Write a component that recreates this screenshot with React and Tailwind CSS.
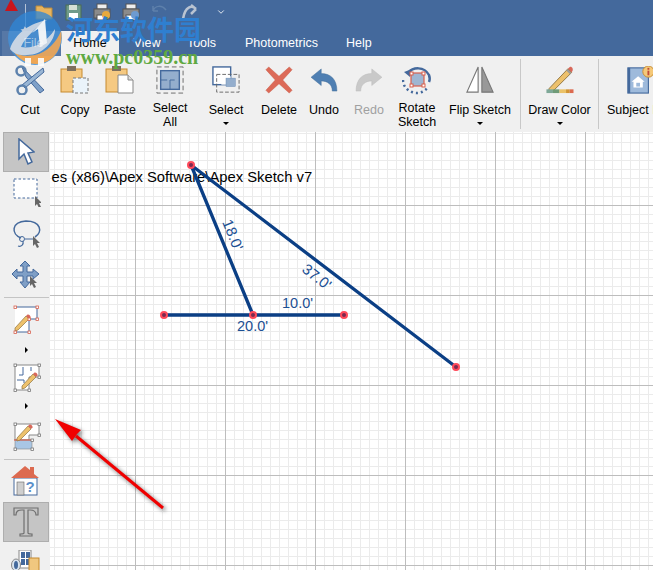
import React from "react";
import { ChevronDown } from "lucide-react";

const FONT = "font-['Liberation_Sans',sans-serif]";

// ribbon icons
const CutIcon = () => (
  <svg width="30" height="30" viewBox="0 0 30 30" fill="none">
    <path d="M7 2 L29 25 L25 28 L11 12 Z" fill="#7fa0c8" stroke="#44699c" />
    <path d="M28 3 L7 20 L10 23 L29 7 Z" fill="#9ab6d4" stroke="#44699c" />
    <circle cx="6" cy="6" r="4.5" stroke="#5d82ad" strokeWidth="2.5" />
    <circle cx="7" cy="25" r="4.5" stroke="#5d82ad" strokeWidth="2.5" />
  </svg>
);

const CopyIcon = () => (
  <svg width="30" height="28" viewBox="0 0 30 28" fill="none">
    <rect x="1" y="3" width="21" height="23" fill="#f5c982" stroke="#c68a2e" />
    <rect x="7" y="0" width="9" height="5" fill="#7d6f5f" />
    <rect x="13" y="12" width="15" height="15" fill="#eaf3fa" stroke="#777" strokeDasharray="3 2" />
  </svg>
);

const PasteIcon = () => (
  <svg width="30" height="28" viewBox="0 0 30 28" fill="none">
    <rect x="1" y="3" width="21" height="23" fill="#f5c982" stroke="#c68a2e" />
    <rect x="7" y="0" width="9" height="5" fill="#7d6f5f" />
    <path d="M13 9 H23 L28 14 V27 H13 Z" fill="#fff" stroke="#888" />
    <path d="M23 9 V14 H28" fill="#ddd" stroke="#888" />
  </svg>
);

const SelectAllIcon = () => (
  <svg width="28" height="28" viewBox="0 0 30 30" fill="none">
    <rect x="1" y="1" width="28" height="28" stroke="#666" strokeDasharray="5 3" />
    <rect x="5" y="5" width="20" height="20" fill="#94aecd" stroke="#44699c" strokeWidth="1.5" />
    <path d="M5 15 H12 M15 15 H20 M15 15 V25" stroke="#44699c" />
  </svg>
);

const SelectIcon = () => (
  <svg width="28" height="28" viewBox="0 0 30 30" fill="none">
    <rect x="1" y="1" width="19" height="19" fill="#fff" stroke="#44699c" strokeWidth="1.5" />
    <rect x="5" y="9" width="24" height="19" stroke="#666" strokeDasharray="4 2" />
    <rect x="10" y="11" width="10" height="9" fill="#fff" />
    <rect x="15" y="13" width="10" height="9" fill="#94aecd" stroke="#6a8bb2" strokeWidth="0.5" />
  </svg>
);

const DeleteIcon = () => (
  <svg width="28" height="28" viewBox="0 0 30 30">
    <path d="M4 1 L15 11 L26 1 L29 4 L19 15 L29 26 L26 29 L15 19 L4 29 L1 26 L11 15 L1 4 Z" fill="#dc6a58" stroke="#c8553f" strokeWidth="0.5" />
  </svg>
);

const UndoIcon = ({ color = "#4f7fb2", flip }) => (
  <svg width="28" height="24" viewBox="0 0 30 26" fill="none" className={flip ? "-scale-x-100" : ""}>
    <path d="M1 10 L12 1 V6 C22 6 29 12 29 25 H24 C24 18 19 14 12 14 V19 Z" fill={color} stroke={flip ? "#b9b9b9" : "#3b6896"} strokeWidth="0.5" />
  </svg>
);

const RotateIcon = () => (
  <svg width="30" height="30" viewBox="0 0 30 30" fill="none">
    <path d="M6 8 C11 2 22 1 27 10 C28 13 28 15 27 17" stroke="#44699c" strokeWidth="2.5" />
    <path d="M2 7 L10 4 L8 12 Z" fill="#44699c" />
    <path d="M1 15 C1 20 4 25 10 27 C15 29 22 28 26 22" stroke="#44699c" strokeWidth="2.5" strokeDasharray="2 3" />
    <rect x="9" y="8" width="13" height="13" fill="#9fb6d2" stroke="#d7604e" strokeWidth="1.2" />
    <rect x="8" y="7" width="3" height="3" fill="#fff" stroke="#d7604e" />
    <rect x="20" y="7" width="3" height="3" fill="#fff" stroke="#d7604e" />
    <rect x="8" y="19" width="3" height="3" fill="#fff" stroke="#d7604e" />
    <rect x="20" y="19" width="3" height="3" fill="#fff" stroke="#d7604e" />
  </svg>
);

const FlipIcon = () => (
  <svg width="28" height="28" viewBox="0 0 30 30">
    <path d="M13 1 V28 H1 Z" fill="#fff" stroke="#777" strokeWidth="1.2" />
    <path d="M17 1 V28 H29 Z" fill="#999" stroke="#777" strokeWidth="1.2" />
  </svg>
);

const DrawColorIcon = () => (
  <svg width="29" height="28" viewBox="0 0 30 30">
    <path d="M4 24 L24 3 L28 7 L8 27 L3 28 Z" fill="#edc16c" stroke="#8f7440" />
    <path d="M24 3 L26 1 C28 0 30 3 29 5 L28 7 Z" fill="#d8685a" />
    <path d="M23 4 L27 8" stroke="#999" strokeWidth="2" />
    <rect x="1" y="25" width="7" height="4" fill="#7fa898" />
    <rect x="8" y="25" width="7" height="4" fill="#6f9b78" />
    <rect x="15" y="25" width="7" height="4" fill="#ebc267" />
    <rect x="22" y="25" width="4" height="4" fill="#d29433" />
    <rect x="26" y="25" width="4" height="4" fill="#dc6a50" />
  </svg>
);

const SubjectIcon = () => (
  <svg width="28" height="28" viewBox="0 0 30 30">
    <rect x="2" y="2" width="22" height="27" fill="#9ebadb" stroke="#44699c" strokeWidth="1.2" />
    <rect x="2" y="2" width="2.5" height="27" fill="#44699c" />
    <path d="M13 11 L20 17 H18 V23 H8 V17 H6 Z" fill="#fff" />
    <rect x="11" y="18" width="4" height="4" fill="#9ebadb" />
    <circle cx="24" cy="6" r="6" fill="#f5c878" stroke="#c68a2e" />
    <rect x="23" y="5" width="2" height="5" fill="#c04a36" />
    <rect x="23" y="2" width="2" height="2" fill="#c04a36" />
  </svg>
);

// small grey cursor in the corner of the tool icons
const Cursor = ({ x, y }) => (
  <path d={`M${x} ${y} l0 10 l2 -2 l2 4 l2 -1 l-2 -4 l3 0 Z`} fill="#666" />
);

const PointerTool = () => (
  <svg width="18" height="28" viewBox="0 0 18 28">
    <path d="M2 1 V21 L7 16 L11 26 L15 24 L11 15 L17 14 Z" fill="#fff" stroke="#44699c" strokeWidth="1.5" />
  </svg>
);

const MarqueeTool = () => (
  <svg width="30" height="30" viewBox="0 0 30 30" fill="none">
    <rect x="3" y="2" width="23" height="19" fill="#fff" stroke="#44699c" strokeDasharray="2.5 2" />
    <Cursor x={24} y={19} />
  </svg>
);

const LassoTool = () => (
  <svg width="30" height="30" viewBox="0 0 30 30" fill="none">
    <path d="M10 20 C0 16 0 4 15 3 C30 3 32 14 24 19" stroke="#44699c" strokeWidth="1.5" />
    <circle cx="11" cy="21" r="2.5" stroke="#44699c" />
    <path d="M12 23 C13 27 10 29 7 28 M14 21 H22" stroke="#44699c" strokeWidth="1.2" />
    <Cursor x={22} y={18} />
  </svg>
);

const MoveTool = () => (
  <svg width="30" height="30" viewBox="0 0 30 30">
    <path d="M14 1 L19 6 H16 V12 H22 V9 L28 14 L22 19 V16 H16 V22 H19 L14 28 L9 22 H12 V16 H6 V19 L1 14 L6 9 V12 H12 V6 H9 Z" fill="#7f9fc6" stroke="#44699c" />
    <Cursor x={19} y={16} />
  </svg>
);

const Handle = ({ x, y, c = "#d7604e" }) => (
  <rect x={x - 1} y={y - 1} width="2.5" height="2.5" fill="#fff" stroke={c} strokeWidth="0.8" />
);

const Pencil = ({ x = 0, y = 0 }) => (
  <g transform={`translate(${x} ${y})`}>
    <path d="M0 14 L11 2 L14 5 L3 16 L0 17 Z" fill="#edc16c" stroke="#8f7440" strokeWidth="0.7" />
    <path d="M11 2 L12.5 0.5 C14 0 16 2 15.5 3.5 L14 5 Z" fill="#d8685a" />
  </g>
);

const LineTool = () => (
  <svg width="30" height="30" viewBox="0 0 30 30" fill="none">
    <path d="M4 2 H26 V14 H18 V27 H4 Z" fill="#fff" />
    <path d="M4 2 H26 V14 H18 V27 H4" stroke="#44699c" />
    <Pencil x={4} y={9} />
    <Handle x={4} y={2} />
    <Handle x={26} y={2} />
    <Handle x={26} y={14} />
    <Handle x={18} y={14} />
    <Handle x={18} y={27} />
    <Handle x={4} y={27} />
  </svg>
);

const RoomTool = () => (
  <svg width="30" height="30" viewBox="0 0 30 30" fill="none">
    <path d="M4 2 H28 V14 H18 V27 H4 Z" fill="#fff" stroke="#888" />
    <path d="M12 4 V12 M8 12 H12 M6 17 H13 M13 17 V20 M20 4 V8" stroke="#44699c" />
    <Pencil x={11} y={9} />
    <Handle x={4} y={2} c="#777" />
    <Handle x={28} y={2} c="#777" />
    <Handle x={28} y={14} c="#777" />
    <Handle x={18} y={27} c="#777" />
    <Handle x={4} y={27} c="#777" />
  </svg>
);

const AreaTool = () => (
  <svg width="30" height="30" viewBox="0 0 30 30" fill="none">
    <path d="M4 2 H28 V13 H18 V18 H4 Z" fill="#fff" stroke="#888" />
    <rect x="4" y="18" width="17" height="9" fill="#a9c6e4" stroke="#888" strokeWidth="0.6" />
    <path d="M3 18 H21" stroke="#d7604e" strokeWidth="1.2" />
    <Pencil x={6} y={2} />
    <Handle x={4} y={2} c="#777" />
    <Handle x={28} y={2} c="#777" />
    <Handle x={28} y={13} c="#777" />
    <Handle x={21} y={18} c="#777" />
    <Handle x={4} y={27} c="#777" />
    <Handle x={21} y={27} c="#777" />
  </svg>
);

const HouseTool = () => (
  <svg width="30" height="30" viewBox="0 0 30 30">
    <rect x="3" y="12" width="23" height="17" fill="#fff" stroke="#44699c" />
    <path d="M0 12 L14 0 L19 4 V1 H23 V8 L28 12 Z" fill="#dc6a50" />
    <rect x="6" y="16" width="7" height="13" fill="#cfcfcf" stroke="#666" strokeWidth="0.6" />
    <text x="19" y="26" fontSize="15" fontWeight="700" fill="#5b8fca" textAnchor="middle" fontFamily="Liberation Sans">?</text>
  </svg>
);

const TextTool = () => (
  <svg width="26" height="30" viewBox="0 0 26 30">
    <path d="M1 1 H25 V8 H23 C23 4 21 3 17 3 H15 V26 C15 27 17 27 19 27 V29 H7 V27 C9 27 11 27 11 26 V3 H9 C5 3 3 4 3 8 H1 Z" fill="#c5c5c5" stroke="#6f6f6f" strokeWidth="1.2" />
  </svg>
);

const SymbolTool = () => (
  <svg width="30" height="21" viewBox="0 0 30 21">
    <rect x="8" y="0" width="12" height="18" fill="#fff" stroke="#888" />
    <rect x="10" y="2" width="4" height="6" fill="#44699c" />
    <rect x="15" y="2" width="4" height="6" fill="#44699c" />
    <rect x="10" y="9" width="4" height="6" fill="#44699c" />
    <rect x="15" y="9" width="4" height="6" fill="#44699c" />
    <ellipse cx="5" cy="15" rx="4.5" ry="6" fill="#d8e3ee" stroke="#888" />
    <ellipse cx="5" cy="15" rx="2" ry="4" fill="#44699c" />
    <rect x="18" y="8" width="10" height="13" fill="#f0c77f" stroke="#c68a2e" />
  </svg>
);

const QuickIcon = ({ children }) => (
  <svg width="20" height="20" viewBox="0 0 20 20" className="shrink-0">{children}</svg>
);

const RibbonButton = ({ icon, label, dropdown, muted, width }) => (
  <button className={`flex flex-col items-center shrink-0 h-[76px] pt-[6px] ${width} text-[12.5px] leading-[14px] ${muted ? "text-[#a0a0a0]" : "text-black"}`}>
    <span className="h-[36px] flex items-center justify-center shrink-0">{icon}</span>
    <span className={`whitespace-pre text-center ${label.includes("\n") ? "mt-[3px]" : "mt-[5px]"}`}>{label}</span>
    {dropdown && <span className="mt-[5px] w-0 h-0 border-x-[3px] border-x-transparent border-t-[3px] border-t-black" />}
  </button>
);

const ToolButton = ({ children, active, h, extra = "" }) => (
  <button className={`w-[46px] ml-[3px] flex justify-center shrink-0 ${h} ${extra || "items-center"} ${active ? "bg-[#c5c5c5] border border-[#aeaeae]" : ""}`}>
    {children}
  </button>
);

const Divider = () => <div className="w-[45px] ml-[4px] my-[1px] h-px bg-[#c4c4c4] shrink-0" />;

const Expand = () => (
  <div className="h-[8px] w-[52px] flex items-center justify-center shrink-0">
    <span className="w-0 h-0 border-y-[3px] border-y-transparent border-l-[3px] border-l-black" />
  </div>
);

const Canvas = () => {
  const w = 603, h = 438;
  const minor = [];
  for (let x = 0; x <= w; x += 9) minor.push(<path key={"x" + x} d={`M${x + 4.5} 0 V${h}`} stroke="#ebebeb" />);
  for (let y = 0; y <= h; y += 9) minor.push(<path key={"y" + y} d={`M0 ${y + 1.5} H${w}`} stroke="#ebebeb" />);
  const major = [];
  for (let x = 85; x <= w; x += 90) major.push(<path key={"mx" + x} d={`M${x + 0.5} 0 V${h}`} stroke="#bdbdbd" />);
  for (let y = 73; y <= h; y += 90) major.push(<path key={"my" + y} d={`M0 ${y + 0.5} H${w}`} stroke="#bdbdbd" />);
  const blue = "#0b3f85";
  const nodes = [[141, 33], [114, 183], [203, 183], [294, 183], [406, 235]];
  return (
    <svg width={w} height={h} viewBox={`0 0 ${w} ${h}`} className="block bg-white" fontFamily="Liberation Sans">
      {minor}
      {major}
      <text x="1.5" y="50" fontSize="14.8" fill="#000">es (x86)\Apex Software\Apex Sketch v7</text>
      <path d="M114 183 H294 M141 33 L203 183 M141 33 L406 235" stroke={blue} strokeWidth="3.3" fill="none" />
      {nodes.map(([x, y]) => (
        <circle key={x} cx={x} cy={y} r="3" fill="#7a2a50" stroke="#ff4a5a" strokeWidth="2" />
      ))}
      <g fill="#1c4f93" fontSize="14.5">
        <text x="232" y="176">10.0'</text>
        <text x="187" y="199">20.0'</text>
        <text transform="translate(172 90) rotate(68)" fontSize="15">18.0'</text>
        <text transform="translate(251 139) rotate(38)" fontSize="15">37.0'</text>
      </g>
      <g style={{ filter: "drop-shadow(2px 2px 2px rgba(0,0,0,.55))" }}>
        <path d="M113 376 L26 304" stroke="#f00000" strokeWidth="3" />
        <path d="M5 287 L31 298 L27 302 L22 309 Z" fill="#f00000" />
      </g>
    </svg>
  );
};

export default function App() {
  return (
    <div className={`relative w-[653px] h-[570px] overflow-hidden flex flex-col bg-[#f0f0f0] ${FONT}`}>
      {/* title bar and tabs */}
      <div className="h-[56px] bg-[#44699c] shrink-0 flex flex-col">
        <div className="h-[31px] flex items-start pl-[4px]">
          <svg width="15" height="12" viewBox="0 0 15 12" className="shrink-0">
            <path d="M7 -1 L14 11 H1 Z" fill="#c9151b" />
          </svg>
          <div className="w-px h-[22px] bg-white/60 mt-[4px] ml-[6px] mr-[8px]" />
          <div className="flex items-center gap-[9px] mt-[2px]">
            <QuickIcon><path d="M2 4 H8 L10 6 H18 V17 H2 Z" fill="#e8b45f" stroke="#b88a3e" /></QuickIcon>
            <QuickIcon><rect x="3" y="3" width="15" height="15" fill="#6f9b8a" stroke="#4b6d53" /><rect x="6" y="3" width="8" height="5" fill="#d6e0d6" /><rect x="6" y="11" width="9" height="7" fill="#fff" /></QuickIcon>
            <QuickIcon><rect x="5" y="2" width="10" height="5" fill="#eee" stroke="#555" /><rect x="2" y="7" width="16" height="9" fill="#8b8b8b" stroke="#555" /><rect x="5" y="13" width="10" height="5" fill="#fff" stroke="#555" /><circle cx="14" cy="13" r="4" fill="#e8a93f" /></QuickIcon>
            <QuickIcon><rect x="5" y="2" width="10" height="5" fill="#eee" stroke="#555" /><rect x="2" y="7" width="16" height="9" fill="#8b8b8b" stroke="#555" /><rect x="5" y="13" width="10" height="5" fill="#fff" stroke="#555" /><circle cx="14" cy="13" r="4" fill="#6d9bd0" /></QuickIcon>
            <QuickIcon><path d="M3 9 C5 3 12 3 16 8 M3 9 L3 4 M3 9 L8 9" stroke="#5e80ab" strokeWidth="1.5" fill="none" /></QuickIcon>
            <QuickIcon><path d="M17 7 C13 3 6 4 4 17 M17 7 L12 3 M17 7 L12 12" stroke="#b9c3d1" strokeWidth="2.5" fill="none" /></QuickIcon>
            <ChevronDown size={10} className="text-white ml-[8px]" />
          </div>
        </div>
        <div className="h-[25px] flex items-end text-[12.5px] text-white">
          <span className="w-[59px] ml-[2px] h-[25px] bg-white/10 flex items-center justify-center pl-[4px] text-white/50 relative z-10">File</span>
          <span className="w-[58px] h-[25px] bg-[#f0f0f0] text-black flex items-center justify-center">Home</span>
          <span className="w-[56px] h-[25px] flex items-center justify-center">View</span>
          <span className="w-[55px] h-[25px] flex items-center justify-center ml-[-1px]">Tools</span>
          <span className="h-[25px] flex items-center ml-[16px]">Photometrics</span>
          <span className="h-[25px] flex items-center ml-[28px]">Help</span>
        </div>
      </div>

      {/* ribbon */}
      <div className="h-[76px] shrink-0 flex items-start bg-[#f0f0f0] overflow-hidden">
        <RibbonButton icon={<CutIcon />} label="Cut" width="w-[52px] ml-[4px]" />
        <RibbonButton icon={<CopyIcon />} label="Copy" width="w-[38px]" />
        <RibbonButton icon={<PasteIcon />} label="Paste" width="w-[52px]" />
        <RibbonButton icon={<SelectAllIcon />} label={"Select\nAll"} width="w-[48px]" />
        <RibbonButton icon={<SelectIcon />} label="Select" dropdown width="w-[64px]" />
        <RibbonButton icon={<DeleteIcon />} label="Delete" width="w-[42px]" />
        <RibbonButton icon={<UndoIcon />} label="Undo" width="w-[48px]" />
        <RibbonButton icon={<UndoIcon color="#c9c9c9" flip />} label="Redo" muted width="w-[42px]" />
        <RibbonButton icon={<RotateIcon />} label={"Rotate\nSketch"} width="w-[54px]" />
        <RibbonButton icon={<FlipIcon />} label="Flip Sketch" dropdown width="w-[72px]" />
        <div className="w-px h-[70px] bg-[#c8c8c8] shrink-0 mt-[3px] ml-[4px]" />
        <RibbonButton icon={<DrawColorIcon />} label="Draw Color" dropdown width="w-[77px]" />
        <div className="w-px h-[70px] bg-[#c8c8c8] shrink-0 mt-[3px]" />
        <RibbonButton icon={<SubjectIcon />} label="Subject Info" width="w-[82px]" />
      </div>

      {/* workspace */}
      <div className="flex flex-1 min-h-0">
        <div className="w-[50px] shrink-0 flex flex-col bg-[#f0f0f0] overflow-hidden">
          <ToolButton active h="h-[40px]"><PointerTool /></ToolButton>
          <ToolButton h="h-[40px]"><MarqueeTool /></ToolButton>
          <ToolButton h="h-[42px]"><LassoTool /></ToolButton>
          <ToolButton h="h-[42px]"><MoveTool /></ToolButton>
          <Divider />
          <ToolButton h="h-[41px]"><LineTool /></ToolButton>
          <div className="h-[6px] shrink-0" />
          <Expand />
          <ToolButton h="h-[48px]"><RoomTool /></ToolButton>
          <Expand />
          <ToolButton h="h-[48px]" extra="items-start pt-[12px]"><AreaTool /></ToolButton>
          <Divider />
          <ToolButton h="h-[40px]"><HouseTool /></ToolButton>
          <div className="h-px shrink-0" />
          <ToolButton active h="h-[40px]"><TextTool /></ToolButton>
          <ToolButton h="h-[30px]" extra="items-start pt-[8px]"><SymbolTool /></ToolButton>
        </div>
        <div className="flex-1 min-w-0 overflow-hidden">
          <Canvas />
        </div>
      </div>

      {/* site watermark over the title bar */}
      <div className="absolute left-[7px] top-[11px] w-[56px] h-[55px] opacity-90">
        <svg width="56" height="55" viewBox="0 0 56 55">
          <circle cx="28" cy="27" r="27" fill="#2f86d6" opacity="0.85" />
          <path d="M6 40 C14 52 30 58 44 48 C52 42 56 30 54 20 C50 30 40 42 28 44 C18 46 10 44 6 40 Z" fill="#ee9f45" />
          <rect x="18" y="47" width="6" height="8" fill="#fff" opacity="0.9" />
          <rect x="31" y="47" width="6" height="8" fill="#fff" opacity="0.9" />
          <path d="M3 38 C8 22 24 12 40 9 C30 16 18 26 14 36 C24 38 38 34 48 18 C48 30 36 44 20 44 C12 45 6 42 3 38 Z" fill="#cfdbe8" />
          <path d="M38 8 L40 32 L33 36 L31 18 L25 22 Z" fill="#fff" />
          <path d="M18 15 l1.5 3 l3 0.4 l-2.3 2 l0.6 3 l-2.8 -1.5 l-2.8 1.5 l0.6 -3 l-2.3 -2 l3 -0.4 Z" fill="#cfdbe8" />
        </svg>
      </div>
      <div className="absolute left-[66px] top-[9px] text-[27px] leading-[40px] font-bold text-[#2f7fd0] font-['Noto_Sans_CJK_SC',sans-serif] whitespace-nowrap">河东软件园</div>
      <div className="absolute left-[66px] top-[46px] text-[20px] leading-[22px] font-bold text-[#5fa942] font-['Liberation_Serif',serif] whitespace-nowrap">www.pc0359.cn</div>
    </div>
  );
}
